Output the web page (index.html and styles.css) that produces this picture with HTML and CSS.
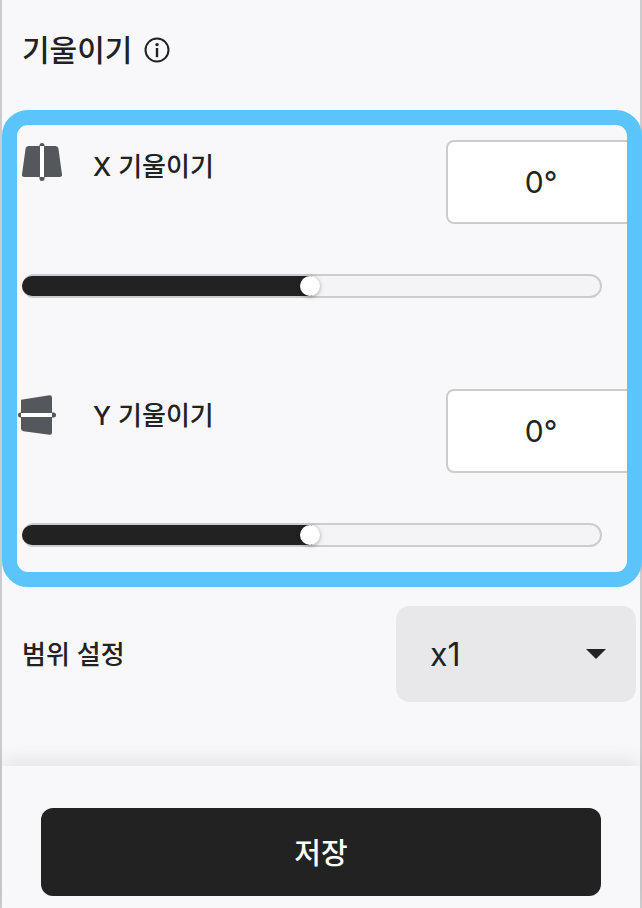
FILE: index.html
```html
<!DOCTYPE html>
<html lang="ko">
<head>
<meta charset="utf-8">
<title>기울이기</title>
<link rel="stylesheet" href="styles.css">
</head>
<body>
<div class="panel">
  <header class="head">
    <h2 class="title">기울이기</h2>
    <svg class="info" viewBox="0 0 26 26" width="26" height="26"><circle cx="13" cy="13" r="11.5" fill="none" stroke="#222" stroke-width="2"/><circle cx="13" cy="7.6" r="1.7" fill="#222"/><rect x="11.8" y="11" width="2.4" height="9.2" fill="#222"/></svg>
  </header>
  <section class="box">
    <div class="row">
      <svg class="icon" viewBox="0 0 40 38" width="40" height="38"><path d="M6.5 3H33.5Q36 3 36.4 5.5L40 31.5Q40.3 34 38 34H2Q-.3 34 0 31.5L3.6 5.5Q4 3 6.5 3Z" fill="#54575c"/><rect x="17.5" y="0" width="5" height="38" rx="2.5" fill="#54575c"/><rect x="18" y="3" width="4" height="31" fill="#fff"/></svg>
      <span class="label">X 기울이기</span>
      <div class="field">0°</div>
    </div>
    <div class="track"><div class="fill"></div><div class="thumb"></div></div>
    <div class="row row-y">
      <svg class="icon icon-y" viewBox="0 0 38 40" width="38" height="40"><path d="M3 4.8 31.5 .2Q34 0 34 2.5V37.5Q34 40 31.5 39.8L5.5 36.2Q3 35.8 3 33.5Z" fill="#54575c"/><rect x="0" y="17.5" width="38" height="5" rx="2.5" fill="#54575c"/><rect x="3" y="18" width="31" height="4" fill="#fff"/></svg>
      <span class="label">Y 기울이기</span>
      <div class="field">0°</div>
    </div>
    <div class="track"><div class="fill"></div><div class="thumb"></div></div>
  </section>
  <div class="range">
    <span class="range-label">범위 설정</span>
    <div class="select"><span>x1</span><i class="caret"></i></div>
  </div>
  <footer class="foot">
    <button class="save" type="button">저장</button>
  </footer>
</div>
</body>
</html>
```
FILE: styles.css
```css
* { box-sizing: border-box; }
html, body { margin: 0; padding: 0; height: 100%; }
body {
  background: #f8f8fa;
  color: #222;
  font-family: Inter, "Noto Sans CJK KR", sans-serif;
  overflow: hidden;
}
.panel {
  width: 642px;
  height: 908px;
  display: flex;
  flex-direction: column;
  border-left: 2px solid #ccccce;
  border-right: 2px solid #ccccce;
  background: #f8f8fa;
}
.head {
  height: 110px;
  padding: 0 0 10px 20px;
  display: flex;
  align-items: center;
  flex: none;
  gap: 12px;
}
.title {
  margin: 0;
  font-size: 30px;
  font-weight: 500;
  line-height: 40px;
  letter-spacing: 0;
}
.info { display: block; }
.box {
  flex: none;
  height: 477px;
  margin-right: -2px;
  border: 15px solid #5ac4fb;
  border-radius: 26px;
  padding: 15px 0 25px 5px;
  overflow: hidden;
}
.row {
  display: flex;
  align-items: flex-start;
  height: 84px;
}
.row-y { margin-top: 91px; }
.icon { flex: none; margin-top: 3px; display: block; }
.icon-y { margin: 6px 0 0 -4px; }
.label {
  flex: none;
  margin-left: 31px;
  width: 353px;
  font-size: 26px;
  font-weight: 500;
  line-height: 34px;
  padding-top: 10px;
}
.row-y .label { margin-left: 37px; }
.field {
  flex: none;
  width: 190px;
  height: 84px;
  background: #fff;
  border: 2px solid #ccccce;
  border-radius: 8px;
  text-align: center;
  font-size: 30px;
  line-height: 81px;
}
.track {
  position: relative;
  width: 580px;
  height: 24px;
  margin-top: 50px;
  background: #f4f4f6;
  border: 2px solid #ccccce;
  border-radius: 12px;
}
.fill {
  width: 290px;
  height: 20px;
  margin-left: -2px;
  background: #222;
  border-radius: 10px 0 0 10px;
}
.thumb {
  position: absolute;
  left: 276px;
  top: 0;
  width: 20px;
  height: 20px;
  border-radius: 50%;
  background: #fff;
  box-shadow: 0 1px 4px rgba(0, 0, 0, .35);
}
.range {
  flex: none;
  margin-top: 19px;
  height: 96px;
  padding: 0 4px 0 20px;
  display: flex;
  align-items: center;
  justify-content: space-between;
}
.range-label { font-size: 26px; font-weight: 500; margin-top: -4px; }
.select {
  width: 240px;
  height: 96px;
  background: #e8e8ea;
  border-radius: 14px;
  display: flex;
  align-items: center;
  justify-content: space-between;
  padding: 0 30px 0 34px;
  font-size: 32px;
}
.caret {
  width: 0;
  height: 0;
  border-left: 10px solid transparent;
  border-right: 10px solid transparent;
  border-top: 10px solid #222;
}
.foot {
  flex: none;
  margin-top: 64px;
  height: 142px;
  padding: 42px 39px 12px;
  background: #f8f8fa;
  box-shadow: 0 -8px 16px rgba(0, 0, 0, .07);
}
.save {
  display: block;
  width: 560px;
  height: 88px;
  border: 0;
  border-radius: 12px;
  background: #222;
  color: #fff;
  font-family: inherit;
  font-size: 29px;
  font-weight: 500;
  padding-bottom: 3px;
}
```
